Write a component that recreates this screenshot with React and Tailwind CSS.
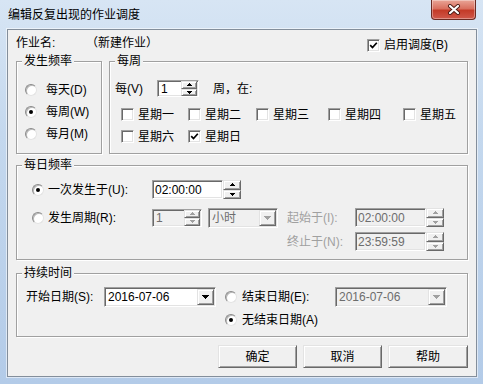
import React from 'react';

const sunken =
  'border border-t-[#a0a0a0] border-l-[#a0a0a0] border-r-white border-b-white shadow-[inset_1px_1px_0_#696969,inset_-1px_-1px_0_#e3e3e3]';
const raised =
  'border border-t-[#e3e3e3] border-l-[#e3e3e3] border-r-[#696969] border-b-[#696969] shadow-[inset_1px_1px_0_#fff,inset_-1px_-1px_0_#a0a0a0]';

function Arrow({ up, off }) {
  return (
    <svg width="5" height="3" viewBox="0 0 5 3" shapeRendering="crispEdges">
      <path d={up ? 'M0 3L2.5 0L5 3Z' : 'M0 0H5L2.5 3Z'} fill={off ? '#a0a0a0' : '#000'} />
    </svg>
  );
}

function DropArrow({ off }) {
  return (
    <svg width="7" height="4" viewBox="0 0 7 4" shapeRendering="crispEdges">
      <path d="M0 0H7L3.5 4Z" fill={off ? '#a0a0a0' : '#000'} />
    </svg>
  );
}

function Spin({ off, className = '' }) {
  return (
    <div className={`flex flex-col shrink-0 ${className}`}>
      <div className={`flex-1 flex items-center justify-center bg-[#f0f0f0] ${raised}`}>
        <Arrow up off={off} />
      </div>
      <div className={`flex-1 flex items-center justify-center bg-[#f0f0f0] ${raised}`}>
        <Arrow off={off} />
      </div>
    </div>
  );
}

function Check({ on }) {
  return (
    <span className={`w-[13px] h-[13px] shrink-0 bg-white flex items-center justify-center ${sunken}`}>
      {on && (
        <svg width="9" height="9" viewBox="0 0 9 9">
          <path d="M1.2 4.2L3.5 6.6L7.8 1.8" stroke="#000" strokeWidth="1.7" fill="none" />
        </svg>
      )}
    </span>
  );
}

function Radio({ on }) {
  return (
    <span className="w-[12px] h-[12px] shrink-0 rounded-full bg-white border border-t-[#8a8a8a] border-l-[#8a8a8a] border-r-[#e3e3e3] border-b-[#e3e3e3] shadow-[inset_1px_1px_0_#b8b8b8] flex items-center justify-center">
      {on && <span className="w-[4px] h-[4px] rounded-full bg-black" />}
    </span>
  );
}

function Group({ title, className = '', children }) {
  return (
    <fieldset
      className={`min-w-0 border border-[#a0a0a0] shadow-[inset_1px_1px_0_#fff,1px_1px_0_#fff] ${className}`}
    >
      <legend className="ml-[5px] px-[2px] bg-[#f0f0f0] leading-[14px]">{title}</legend>
      {children}
    </fieldset>
  );
}

function TimeBox({ value, off }) {
  return (
    <div className="flex h-[19px] w-[89px]">
      <div
        className={`flex-1 flex items-center pl-[2px] ${sunken} ${
          off ? 'bg-[#f0f0f0] text-[#6d6d6d]' : 'bg-white'
        }`}
      >
        {value}
      </div>
      <Spin off={off} className="w-[18px]" />
    </div>
  );
}

function Combo({ value, off, className = '' }) {
  return (
    <div
      className={`flex h-[20px] ${sunken} ${off ? 'bg-[#f0f0f0] text-[#6d6d6d]' : 'bg-white'} ${className}`}
    >
      <div className="flex-1 flex items-center pl-[3px]">{value}</div>
      <div className={`w-[17px] m-[1px] flex items-center justify-center bg-[#f0f0f0] ${raised}`}>
        <DropArrow off={off} />
      </div>
    </div>
  );
}

function Button({ children, className = '' }) {
  return (
    <div className={`h-[23px] flex items-center justify-center bg-[#f0f0f0] ${raised} ${className}`}>
      {children}
    </div>
  );
}

export default function App() {
  return (
    <div className="w-[483px] h-[384px] flex flex-col overflow-hidden bg-[linear-gradient(180deg,#d7e5f4_0%,#c4d8ee_35%,#b3cbe8_100%)] text-[12px] leading-[14px] text-black font-['Liberation_Sans','Noto_Sans_CJK_SC',sans-serif]">
      {/* title bar */}
      <div className="h-[29px] shrink-0 flex items-start">
        <div className="pl-[8px] pt-[8px]">编辑反复出现的作业调度</div>
        <div className="ml-auto mr-[7px] w-[45px] h-[20px] rounded-b-[4px] border border-t-0 border-[#6b2a22] bg-[linear-gradient(180deg,#e9a597_0%,#d9705f_45%,#c43b28_55%,#d0584a_100%)] shadow-[inset_0_0_0_1px_rgba(255,255,255,0.35)] flex items-center justify-center">
          <svg width="14" height="11" viewBox="0 0 14 11">
            <path d="M3 2L11 9M11 2L3 9" stroke="#4a1a14" strokeWidth="4" strokeLinecap="round" />
            <path d="M3 2L11 9M11 2L3 9" stroke="#fff" strokeWidth="2.2" strokeLinecap="round" />
          </svg>
        </div>
      </div>

      {/* client area */}
      <div className="ml-[7px] w-[470px] h-[348px] shrink-0 border border-[#838e9b] bg-[#f0f0f0] shadow-[0_0_0_1px_rgba(255,255,255,0.55)] px-[8px] flex flex-col">
        <div className="h-[24px] pt-[6px] flex shrink-0">
          <span className="w-[70px]">作业名:</span>
          <span>（新建作业）</span>
          <div className="ml-auto w-[101px] flex items-center gap-[4px]">
            <Check on />
            <span>启用调度(B)</span>
          </div>
        </div>

        <div className="h-[100px] flex gap-[7px] shrink-0">
          <Group title="发生频率" className="w-[86px] h-[100px]">
            <div className="pt-[11px] pl-[8px]">
              <div className="h-[22px] flex items-center gap-[9px]">
                <Radio />
                <span>每天(D)</span>
              </div>
              <div className="h-[22px] flex items-center gap-[9px]">
                <Radio on />
                <span>每周(W)</span>
              </div>
              <div className="h-[22px] flex items-center gap-[9px]">
                <Radio />
                <span>每月(M)</span>
              </div>
            </div>
          </Group>

          <Group title="每周" className="flex-1 h-[100px]">
            <div className="pl-[5px] mt-[12px] h-[17px] flex items-center">
              <span className="w-[42px]">每(V)</span>
              <div className={`w-[42px] h-[17px] flex bg-white ${sunken}`}>
                <div className="flex-1 flex items-center pl-[3px]">1</div>
                <Spin className="w-[16px] m-[1px] mb-0 mt-0" />
              </div>
              <span className="ml-[14px]">周，在:</span>
            </div>
            <div className="pl-[11px] mt-[11px] h-[13px] flex items-center">
              <div className="w-[67px] flex items-center gap-[4px]">
                <Check />
                <span>星期一</span>
              </div>
              <div className="w-[68px] flex items-center gap-[4px]">
                <Check />
                <span>星期二</span>
              </div>
              <div className="w-[72px] flex items-center gap-[4px]">
                <Check />
                <span>星期三</span>
              </div>
              <div className="w-[75px] flex items-center gap-[4px]">
                <Check />
                <span>星期四</span>
              </div>
              <div className="flex items-center gap-[4px]">
                <Check />
                <span>星期五</span>
              </div>
            </div>
            <div className="pl-[11px] mt-[9px] h-[13px] flex items-center">
              <div className="w-[67px] flex items-center gap-[4px]">
                <Check />
                <span>星期六</span>
              </div>
              <div className="flex items-center gap-[4px]">
                <Check on />
                <span>星期日</span>
              </div>
            </div>
          </Group>
        </div>

        <Group title="每日频率" className="mt-[4px] h-[102px] shrink-0">
          <div className="pl-[15px] mt-[8px] h-[19px] flex items-center">
            <div className="w-[120px] flex items-center gap-[4px]">
              <Radio on />
              <span>一次发生于(U):</span>
            </div>
            <div className="flex h-[19px]">
              <div className={`w-[71px] flex items-center pl-[2px] bg-white ${sunken}`}>02:00:00</div>
              <Spin className="w-[18px]" />
            </div>
          </div>
          <div className="pl-[15px] mt-[9px] h-[19px] flex items-center">
            <div className="w-[120px] flex items-center gap-[4px]">
              <Radio />
              <span>发生周期(R):</span>
            </div>
            <div className={`w-[50px] h-[18px] flex bg-[#f0f0f0] text-[#6d6d6d] ${sunken}`}>
              <div className="flex-1 flex items-center pl-[3px]">1</div>
              <Spin off className="w-[16px] mr-[1px]" />
            </div>
            <Combo value="小时" off className="ml-[6px] w-[70px] h-[19px]" />
            <span className="ml-[9px] w-[68px] text-[#a0a0a0]">起始于(I):</span>
            <TimeBox value="02:00:00" off />
          </div>
          <div className="pl-[270px] mt-[5px] h-[19px] flex items-center">
            <span className="w-[68px] text-[#a0a0a0]">终止于(N):</span>
            <TimeBox value="23:59:59" off />
          </div>
        </Group>

        <Group title="持续时间" className="mt-[6px] h-[71px] shrink-0">
          <div className="pl-[9px] mt-[7px] h-[20px] flex items-center">
            <span className="w-[78px]">开始日期(S):</span>
            <Combo value="2016-07-06" className="w-[112px]" />
            <div className="ml-[9px] w-[110px] flex items-center gap-[5px]">
              <Radio />
              <span>结束日期(E):</span>
            </div>
            <Combo value="2016-07-06" off className="w-[112px]" />
          </div>
          <div className="pl-[208px] mt-[6px] h-[14px] flex items-center gap-[5px]">
            <Radio on />
            <span>无结束日期(A)</span>
          </div>
        </Group>

        <div className="mt-[8px] flex justify-end gap-[6px] shrink-0">
          <Button className="w-[79px]">确定</Button>
          <Button className="w-[79px]">取消</Button>
          <Button className="w-[80px]">帮助</Button>
        </div>
      </div>
    </div>
  );
}
